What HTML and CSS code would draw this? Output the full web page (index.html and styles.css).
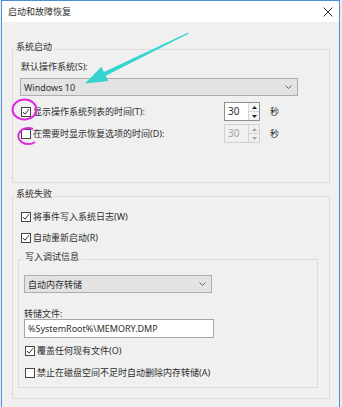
FILE: index.html
```html
<!DOCTYPE HTML>
<html>
    <head>
        <meta charset="utf-8">
        <title>启动和故障恢复</title>
        <link rel="stylesheet" href="styles.css">
    </head>
    <body>
        <div class="window">
            <div class="titlebar">
                <span class="title">启动和故障恢复</span>
                <svg class="close" width="10" height="10" viewBox="0 0 10 10">
                    <path d="M0.5 0.5 L9.5 9.5 M9.5 0.5 L0.5 9.5" stroke="#333" stroke-width="1" fill="none"/>
                </svg>
            </div>
            <div class="content">
                <fieldset class="group startup">
                    <legend>系统启动</legend>
                    <div class="label">默认操作系统(S):</div>
                    <div class="select os">
                        <span>Windows 10</span>
                        <svg class="chevron" width="7" height="4" viewBox="0 0 7 4"><path d="M0.5 0.5 L3.5 3.5 L6.5 0.5" stroke="#666" fill="none"/></svg>
                    </div>
                    <div class="row timed">
                        <span class="check on"><svg width="8" height="8" viewBox="0 0 8 8"><path d="M1 4 L3 6.2 L7 1.2" stroke="#333" stroke-width="1" fill="none"/></svg></span>
                        <span class="text">显示操作系统列表的时间(T):</span>
                        <span class="spin">
                            <span class="spin-value">30</span>
                            <span class="spin-buttons">
                                <span class="spin-btn"><svg width="5" height="3" viewBox="0 0 5 3"><path d="M0 3 L2.5 0 L5 3 Z" fill="#222"/></svg></span>
                                <span class="spin-btn"><svg width="5" height="3" viewBox="0 0 5 3"><path d="M0 0 L2.5 3 L5 0 Z" fill="#222"/></svg></span>
                            </span>
                        </span>
                        <span class="unit">秒</span>
                    </div>
                    <div class="row timed">
                        <span class="check"></span>
                        <span class="text">在需要时显示恢复选项的时间(D):</span>
                        <span class="spin disabled">
                            <span class="spin-value">30</span>
                            <span class="spin-buttons">
                                <span class="spin-btn"><svg width="5" height="3" viewBox="0 0 5 3"><path d="M0 3 L2.5 0 L5 3 Z" fill="#a8a8a8"/></svg></span>
                                <span class="spin-btn"><svg width="5" height="3" viewBox="0 0 5 3"><path d="M0 0 L2.5 3 L5 0 Z" fill="#a8a8a8"/></svg></span>
                            </span>
                        </span>
                        <span class="unit">秒</span>
                    </div>
                </fieldset>

                <fieldset class="group failure">
                    <legend>系统失败</legend>
                    <div class="row option first">
                        <span class="check on"><svg width="8" height="8" viewBox="0 0 8 8"><path d="M1 4 L3 6.2 L7 1.2" stroke="#333" stroke-width="1" fill="none"/></svg></span>
                        <span class="text">将事件写入系统日志(W)</span>
                    </div>
                    <div class="row option">
                        <span class="check on"><svg width="8" height="8" viewBox="0 0 8 8"><path d="M1 4 L3 6.2 L7 1.2" stroke="#333" stroke-width="1" fill="none"/></svg></span>
                        <span class="text">自动重新启动(R)</span>
                    </div>

                    <fieldset class="group debug">
                        <legend>写入调试信息</legend>
                        <div class="select dump">
                            <span>自动内存转储</span>
                            <svg class="chevron" width="7" height="4" viewBox="0 0 7 4"><path d="M0.5 0.5 L3.5 3.5 L6.5 0.5" stroke="#666" fill="none"/></svg>
                        </div>
                        <div class="label file-label">转储文件:</div>
                        <div class="textbox">%SystemRoot%\MEMORY.DMP</div>
                        <div class="row option first">
                            <span class="check on"><svg width="8" height="8" viewBox="0 0 8 8"><path d="M1 4 L3 6.2 L7 1.2" stroke="#333" stroke-width="1" fill="none"/></svg></span>
                            <span class="text">覆盖任何现有文件(O)</span>
                        </div>
                        <div class="row option">
                            <span class="check"></span>
                            <span class="text">禁止在磁盘空间不足时自动删除内存转储(A)</span>
                        </div>
                    </fieldset>
                </fieldset>
            </div>
        </div>

        <!-- annotation marks drawn over the dialog -->
        <svg class="marks" width="342" height="407" viewBox="0 0 342 407">
            <path d="M188.3 32.5 L188.8 33.5 L105.7 75.7 L108.3 81.1 L85 83.5 L101.3 66.7 L103.9 72.1 Z" fill="#35d4cf"/>
            <ellipse cx="24.5" cy="109.5" rx="12" ry="10" stroke="#d92fd9" stroke-width="2" fill="none"/>
            <path d="M33 129 A10 8 0 1 0 35 142" stroke="#d92fd9" stroke-width="2" fill="none"/>
        </svg>
    </body>
</html>
```

FILE: styles.css
```css
body {
    margin: 0;
    background: #e9eef3;
    font-family: "Noto Sans", "Noto Sans CJK SC", sans-serif;
    font-size: 9px;
    color: #2e2e2e;
}

.window {
    margin-left: 1px;
    width: 337px;
    height: 420px;
    border: 1px solid #4a90d9;
    border-bottom: none;
    background: #f0f0f0;
}

.titlebar {
    height: 21px;
    background: #fff;
    display: flex;
    align-items: center;
    justify-content: space-between;
    padding: 0 6px 0 6px;
}

.title {
    line-height: 12px;
}

.close {
    display: block;
}

.content {
    padding: 20px 9px 0 10px;
}

fieldset.group {
    margin: 0;
    min-width: 0;
    border: 1px solid #dcdcdc;
}

fieldset.group legend {
    padding: 0 2px 4px;
    line-height: 10px;
}

.startup {
    padding: 5px 0 39px 8px;
}

.startup legend {
    margin-left: -7px;
}

.failure {
    margin-top: 6px !important;
    padding: 7px 11px 10px 5px;
}

.failure > legend {
    margin-left: -4px;
}

.debug {
    margin-top: 7px !important;
    padding: 9px 0 7px 5px;
}

.debug legend {
    margin-left: -1px;
}

.label {
    line-height: 12px;
}

.select {
    display: flex;
    align-items: center;
    justify-content: space-between;
    box-sizing: border-box;
    height: 18px;
    padding: 0 5px 0 3px;
    background: #e3e3e3;
    border: 1px solid #adadad;
}

.select.os {
    width: 278px;
    margin: 5px 0 0 -1px;
}

.select.dump {
    width: 188px;
}

.row {
    display: flex;
    align-items: center;
}

.row.timed {
    height: 19px;
    margin-top: 6px;
}

.row.timed + .row.timed {
    margin-top: 3px;
}

.check {
    display: flex;
    align-items: center;
    justify-content: center;
    box-sizing: border-box;
    width: 10px;
    height: 10px;
    border: 1px solid #444;
    background: #fff;
}

.check svg {
    display: block;
}

.row .text {
    margin-left: 2px;
    line-height: 12px;
}

.row.timed .text {
    width: 191px;
}

.spin {
    display: flex;
    box-sizing: border-box;
    width: 36px;
    height: 19px;
    border: 1px solid #8f8f8f;
    background: #fff;
}

.spin-value {
    flex: 1;
    padding-left: 3px;
    line-height: 17px;
    font-size: 10px;
}

.spin-buttons {
    display: flex;
    flex-direction: column;
    width: 10px;
    border-left: 1px solid #d4d4d4;
}

.spin-btn {
    flex: 1;
    display: flex;
    align-items: center;
    justify-content: center;
    background: #f5f5f5;
}

.spin-btn + .spin-btn {
    border-top: 1px solid #d4d4d4;
}

.spin.disabled {
    border-color: #d0d0d0;
    background: #f0f0f0;
    color: #a6a6a6;
}

.spin.disabled .spin-btn {
    background: #f0f0f0;
}

.unit {
    margin-left: 10px;
}

.failure > .row.option {
    margin-left: 3px;
    height: 14px;
    margin-top: 7px;
}

.failure > .row.option.first {
    margin-top: 0;
}

.file-label {
    margin-top: 16px;
    line-height: 10px;
}

.textbox {
    box-sizing: border-box;
    width: 190px;
    height: 19px;
    padding-left: 3px;
    line-height: 17px;
    background: #fff;
    border: 1px solid #a5a5a5;
}

.debug .row.option {
    margin-left: 1px;
    height: 14px;
    margin-top: 8px;
}

.debug .row.option.first {
    margin-top: 6px;
}

.marks {
    position: absolute;
    left: 0;
    top: 0;
    pointer-events: none;
}
```
